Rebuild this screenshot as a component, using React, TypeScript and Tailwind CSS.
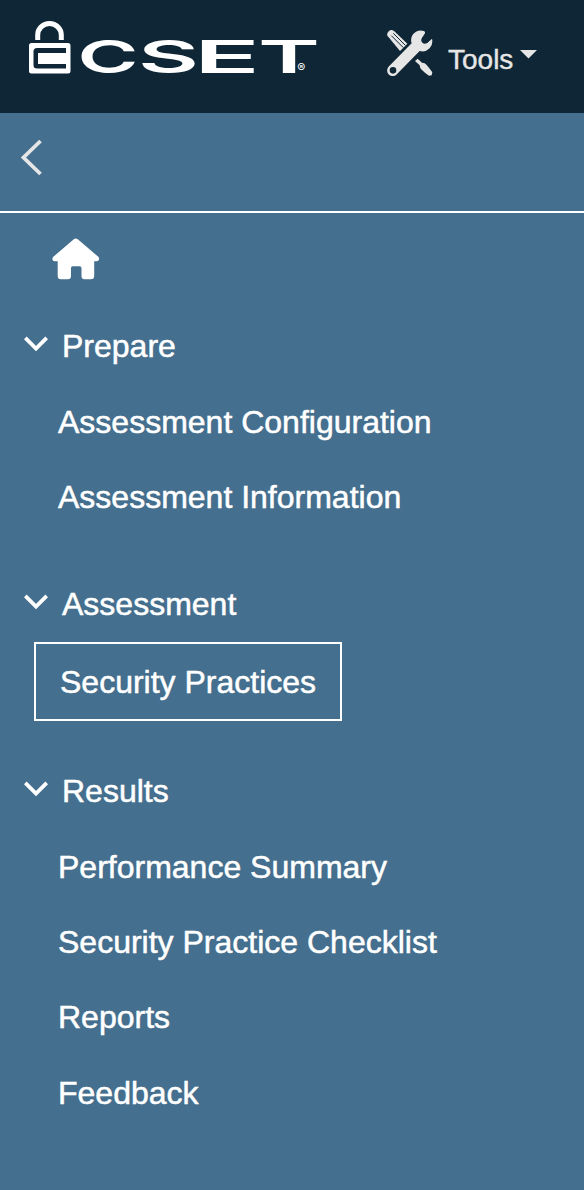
import React from "react";

type NavItem = { label: string; height: string; active?: boolean };
type NavGroup = { title: string; items: NavItem[] };

const groups: NavGroup[] = [
  {
    title: "Prepare",
    items: [
      { label: "Assessment Configuration", height: "h-[75px]" },
      { label: "Assessment Information", height: "h-[75px]" },
    ],
  },
  {
    title: "Assessment",
    items: [{ label: "Security Practices", height: "h-[79px]", active: true }],
  },
  {
    title: "Results",
    items: [
      { label: "Performance Summary", height: "h-[75px]" },
      { label: "Security Practice Checklist", height: "h-[75px]" },
      { label: "Reports", height: "h-[75px]" },
      { label: "Feedback", height: "h-[77px]" },
    ],
  },
];

const wordmark = [
  { letter: "C", x: 77.5, width: 61, weight: 600 },
  { letter: "S", x: 138, width: 61, weight: 600 },
  { letter: "E", x: 194, width: 66, weight: 600 },
  { letter: "T", x: 258, width: 62, weight: 600 },
];

function Logo() {
  return (
    <svg width="320" height="113" viewBox="0 0 320 113" className="shrink-0 font-['Inter',sans-serif]" fill="white">
      <path d="M37.700 40v-5a11.800 11.500 0 0 1 23.600 0V40" fill="none" stroke="white" strokeWidth="5" />
      <path
        fillRule="evenodd"
        d="M31.500 43h36.500a2.500 2.500 0 0 1 2.500 2.500v25.500a2.500 2.500 0 0 1-2.500 2.500h-36.500a2.500 2.500 0 0 1-2.500-2.500v-25.500a2.500 2.500 0 0 1 2.500-2.500zM37 48a3.500 3.500 0 0 0-3.500 3.500v13.500a3.500 3.500 0 0 0 3.500 3.500h29v-4.500h-28v-11h28v-5z"
      />
      {wordmark.map((w) => (
        <text
          key={w.letter}
          x={w.x}
          y="73"
          fontSize="45"
          fontWeight={w.weight}
          textLength={w.width}
          lengthAdjust="spacingAndGlyphs"
        >
          {w.letter}
        </text>
      ))}
      <text x="297.300" y="71.500" fontSize="12">®</text>
    </svg>
  );
}

function ToolsIcon() {
  return (
    <svg width="46" height="46" viewBox="10 10 138 138" fill="#e6e6e6">
      <path d="M15 32a12 12 0 0 1 17-18L71 51 49 73z" />
      <path d="M23 27l36 36M29 20l36 36" fill="none" stroke="#0e2635" strokeWidth="3" />
      <path d="M102 96l13 12q9 0 14 7 8 9 17 22l-2 9-8 1q-12-8-22-18-6-5-6-13L94 103z" />
      <path
        fillRule="evenodd"
        stroke="#0e2635"
        strokeWidth="4"
        paintOrder="stroke"
        d="M121 13Q101 7 88 23q-9 12-4 27L16 119a16 16 0 1 0 22 25l70-71q17 5 30-8 11-13 7-29l-14 13q-9 5-15-1-6-6-1-15l9-13q1-5-3-7zM28 121a10 10 0 1 1 0 20 10 10 0 1 1 0-20z"
      />
    </svg>
  );
}

function HomeIcon() {
  return (
    <svg width="48" height="42" viewBox="0 0 48 42" fill="white">
      <path d="M21.800 1.300q2-1.800 4 0L46.300 18.800q1.300 1.500.5 3.200-.6 1.300-2.300 1.300h-2.300V38q0 3.300-3.300 3.300h-6.200q-3.200 0-3.200-3.300V30q0-1.800-1.800-1.800h-7q-1.700 0-1.700 1.800v8q0 3.300-3.200 3.300H9q-3.300 0-3.300-3.300V23.300H3q-1.700 0-2.400-1.300-.6-1.700.7-3.200z" />
    </svg>
  );
}

function Chevron() {
  return (
    <svg width="24" height="16" viewBox="0 0 24 16" className="mb-[5px] shrink-0">
      <path d="M1.300 1.900L12 12.500 22.700 1.900" fill="none" stroke="white" strokeWidth="3.800" />
    </svg>
  );
}

export default function App() {
  return (
    <div className="flex h-[1190px] w-[584px] flex-col overflow-hidden bg-[#456f8e] font-['Liberation_Sans',Arial,sans-serif] text-white">
      <header className="flex h-[113px] shrink-0 bg-[#0e2635]">
        <Logo />
        <button className="flex h-[105px] items-center pl-[67px] text-[#e6e6e6]">
          <ToolsIcon />
          <span className="ml-[15px] mt-[15px] text-[28px] leading-8 [-webkit-text-stroke:0.4px_#e6e6e6]">Tools</span>
          <svg width="17" height="9" viewBox="0 0 17 9" fill="#e6e6e6" className="ml-[7px] mt-[4px]">
            <path d="M0 0h17L8.500 8.500z" />
          </svg>
        </button>
      </header>
      <div className="flex h-[100px] shrink-0 items-start border-b-2 border-white pl-[21px] pt-[26px]">
        <svg width="22" height="37" viewBox="0 0 22 37">
          <path d="M19.500 2L2.500 18.500l17 16.500" fill="none" stroke="#e6e6e6" strokeWidth="3.800" />
        </svg>
      </div>
      <div className="flex h-[95px] shrink-0 pl-[51.500px] pt-[24.500px]">
        <HomeIcon />
      </div>
      <nav className="flex flex-col gap-8 text-[32px] leading-9 [-webkit-text-stroke:0.5px_white]">
        {groups.map((group) => (
          <section key={group.title} className="flex flex-col items-start">
            <h2 className="flex h-[76px] items-center gap-3.5 pl-6">
              <Chevron />
              {group.title}
            </h2>
            {group.items.map((item) => (
              <a
                key={item.label}
                className={`flex items-center whitespace-nowrap ${item.height} ${
                  item.active ? "ml-[34px] w-[308px] border-2 border-white pl-6" : "pl-[58px]"
                }`}
              >
                {item.label}
              </a>
            ))}
          </section>
        ))}
      </nav>
    </div>
  );
}
